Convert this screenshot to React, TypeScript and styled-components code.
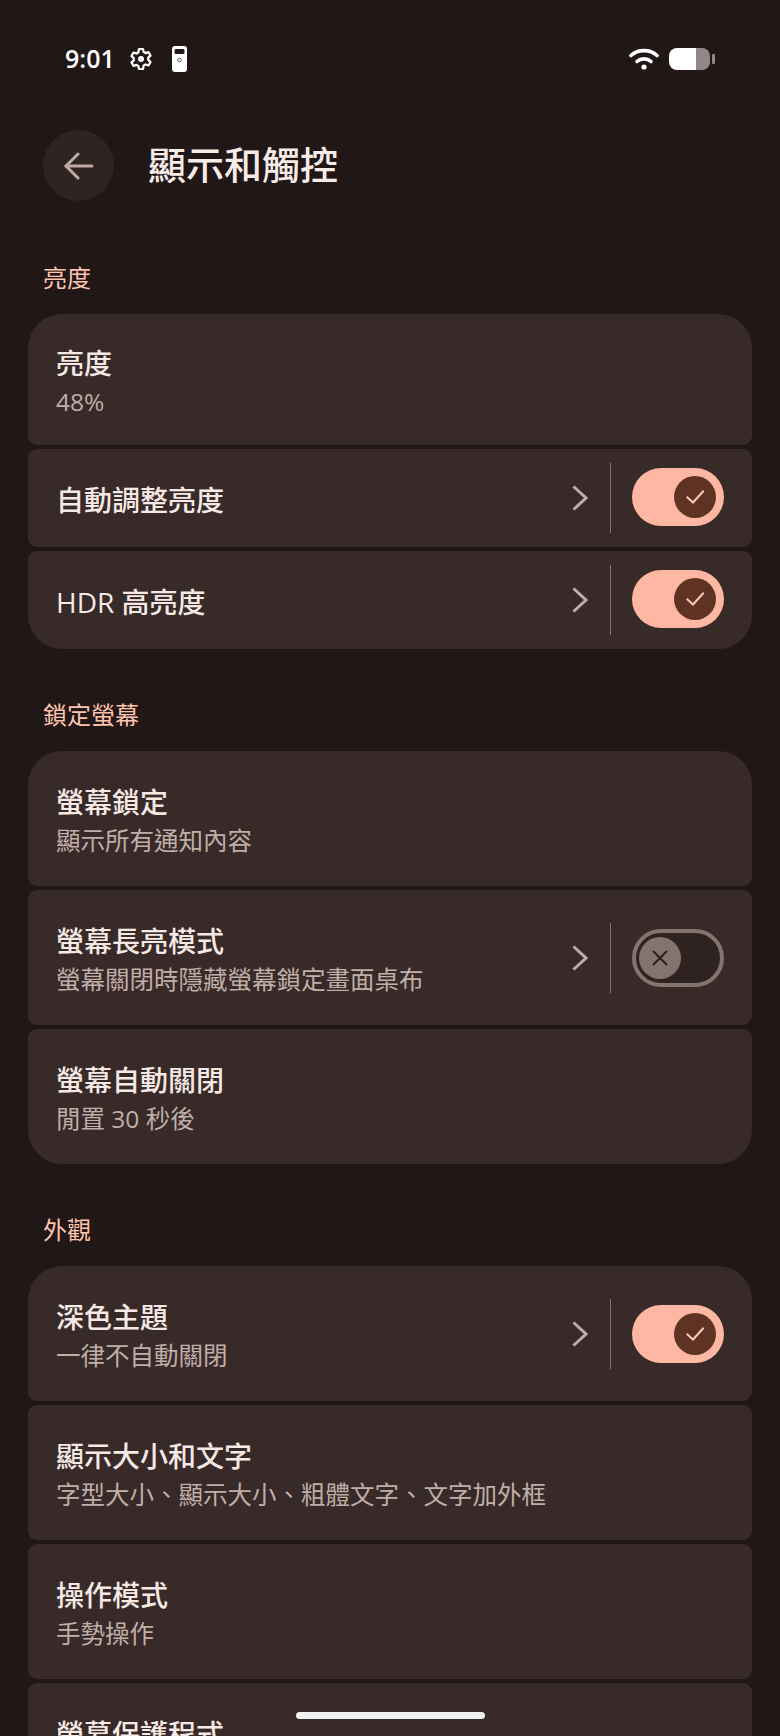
import React from "react";
import styled, { createGlobalStyle } from "styled-components";

const Global = createGlobalStyle`
  html, body { margin: 0; padding: 0; background: #201716; }
  body { width: 780px; height: 1736px; overflow: hidden; }
`;

const Font = `"Open Sans", "Noto Sans CJK TC", "Noto Sans", sans-serif`;

const Page = styled.div`
  position: relative;
  width: 780px;
  height: 1736px;
  overflow: hidden;
  background: #201716;
  font-family: ${Font};
  color: #f1dfda;
`;

const StatusBar = styled.div`
  height: 34px;
  padding: 42px 0 0 65px;
  display: flex;
  align-items: center;
  color: #fff;
`;

const Clock = styled.span`
  font-size: 25px;
  font-weight: 600;
  width: 60px;
  margin-top: -3px;
`;

const StatusGlyph = styled.svg<{ $ml?: number }>`
  display: block;
  flex: none;
  margin-left: ${(p) => p.$ml ?? 0}px;
`;

const StatusRight = styled.div`
  margin-left: auto;
  margin-right: 65px;
  display: flex;
  align-items: center;
  gap: 9px;
`;

const Header = styled.div`
  margin-top: 54px;
  padding-left: 43px;
  display: flex;
  align-items: center;
  height: 71px;
`;

const BackButton = styled.div`
  width: 71px;
  height: 71px;
  border-radius: 50%;
  background: #2e2422;
  display: flex;
  align-items: center;
  justify-content: center;
`;

const Title = styled.h1`
  margin: -4px 0 0 34px;
  font-size: 38px;
  line-height: 48px;
  font-weight: 500;
  color: #f8ece8;
`;

const SectionLabel = styled.div<{ $mt: number }>`
  margin-top: ${(p) => p.$mt}px;
  padding-left: 43px;
  font-size: 24px;
  line-height: 32px;
  font-weight: 400;
  color: #ffc4ae;
`;

const Card = styled.div`
  margin: 20px 28px 0;
  display: flex;
  flex-direction: column;
  gap: 4px;
`;

const Row = styled.div<{ $h: number; $first?: boolean; $last?: boolean }>`
  height: ${(p) => p.$h}px;
  box-sizing: border-box;
  background: #382a28;
  border-radius: ${(p) => (p.$first ? "34px 34px" : "9px 9px")} ${(p) => (p.$last ? "34px 34px" : "9px 9px")};
  padding: 0 28px 0 28px;
  display: flex;
  align-items: center;
  flex: none;
`;

const RowText = styled.div`
  flex: 1;
  min-width: 0;
  padding-top: 4px;
`;

const RowTitle = styled.div`
  font-size: 28px;
  line-height: 38px;
  font-weight: 500;
  color: #f6e9e5;
  white-space: nowrap;
`;

const RowSub = styled.div`
  margin-top: 2px;
  font-size: 24.5px;
  line-height: 35px;
  font-weight: 400;
  color: #c0aea8;
  white-space: nowrap;
`;

const Chevron = styled.svg`
  display: block;
  flex: none;
  margin-right: 22px;
`;

const Divider = styled.div`
  width: 1px;
  height: 70px;
  flex: none;
  background: #85736e;
  margin-right: 21px;
`;

const Track = styled.div<{ $on: boolean; $compact: boolean }>`
  width: 92px;
  height: 58px;
  margin-bottom: ${(p) => (p.$compact ? 2 : 0)}px;
  box-sizing: border-box;
  border-radius: 29px;
  flex: none;
  display: flex;
  align-items: center;
  background: ${(p) => (p.$on ? "#fdb7a2" : "#2f2321")};
  border: ${(p) => (p.$on ? "none" : "4px solid #85736e")};
  justify-content: ${(p) => (p.$on ? "flex-end" : "flex-start")};
  padding: ${(p) => (p.$on ? "0 8px" : "0 3px")};
`;

const Thumb = styled.div<{ $on: boolean }>`
  width: 42px;
  height: 42px;
  border-radius: 50%;
  background: ${(p) => (p.$on ? "#5f3324" : "#85736e")};
  display: flex;
  align-items: center;
  justify-content: center;
`;

const HomeBar = styled.div`
  position: absolute;
  left: 296px;
  top: 1712px;
  width: 189px;
  height: 7px;
  border-radius: 4px;
  background: #f1f1f1;
`;

function Control({ on, compact }: { on: boolean; compact: boolean }) {
  return (
    <>
      <Chevron width="16" height="26" viewBox="0 0 16 26" fill="none" stroke="#bdaea9" strokeWidth="3">
        <path d="M1.5 1.5 L14 13 L1.5 24.5" />
      </Chevron>
      <Divider />
      <Track $on={on} $compact={compact}>
        <Thumb $on={on}>
          {on ? (
            <svg width="22" height="22" viewBox="0 0 22 22" fill="none" stroke="#ffc9b6" strokeWidth="2" strokeLinecap="square">
              <path d="M3.5 11.5 L9 16.5 L19 5.5" />
            </svg>
          ) : (
            <svg width="20" height="20" viewBox="0 0 20 20" fill="none" stroke="#2c201e" strokeWidth="2">
              <path d="M3 3 L17 17 M17 3 L3 17" />
            </svg>
          )}
        </Thumb>
      </Track>
    </>
  );
}

type Item = { title: string; sub?: string; on?: boolean; h: number };

function Group({ items }: { items: Item[] }) {
  return (
    <Card>
      {items.map((it, i) => (
        <Row key={it.title} $h={it.h} $first={i === 0} $last={i === items.length - 1}>
          <RowText>
            <RowTitle>{it.title}</RowTitle>
            {it.sub && <RowSub>{it.sub}</RowSub>}
          </RowText>
          {it.on !== undefined && <Control on={it.on} compact={it.h < 100} />}
        </Row>
      ))}
    </Card>
  );
}

export default function App() {
  return (
    <Page>
      <Global />
      <StatusBar>
        <Clock>9:01</Clock>
        <StatusGlyph $ml={4} width="24" height="24" viewBox="0 0 24 24" fill="none" stroke="#fff" strokeWidth="2.2" strokeLinejoin="round">
          <path d="M10 2 h4 l.6 3 a7.5 7.5 0 0 1 2 1.15 l2.9-1 2 3.5 -2.3 2 a7.5 7.5 0 0 1 0 2.3 l2.3 2 -2 3.5 -2.9-1 a7.5 7.5 0 0 1-2 1.15 L14 22 h-4 l-.6-3 a7.5 7.5 0 0 1-2-1.15 l-2.9 1 -2-3.5 2.3-2 a7.5 7.5 0 0 1 0-2.3 l-2.3-2 2-3.5 2.9 1 a7.5 7.5 0 0 1 2-1.15 Z" />
          <circle cx="12" cy="12" r="3" fill="#fff" stroke="none" />
        </StatusGlyph>
        <StatusGlyph $ml={19} width="15" height="26" viewBox="0 0 15 26">
          <rect x="0" y="0" width="15" height="26" rx="3" fill="#fff" />
          <rect x="2.5" y="3" width="10" height="5" rx="1.5" fill="#201716" />
          <circle cx="7.5" cy="14" r="1.8" fill="none" stroke="#555" strokeWidth="1" />
        </StatusGlyph>
        <StatusRight>
          <StatusGlyph width="30" height="24" viewBox="0 0 30 24" fill="none" stroke="#fff" strokeWidth="3.6" strokeLinecap="round">
            <path d="M2 8.5 C 9 2, 21 2, 28 8.5" />
            <path d="M8 14.5 C 12 11, 18 11, 22 14.5" />
            <circle cx="15" cy="20" r="2.6" fill="#fff" stroke="none" />
          </StatusGlyph>
          <StatusGlyph width="47" height="24" viewBox="0 0 47 24">
            <path d="M9 1 H28 V23 H9 A8 8 0 0 1 1 15 V9 A8 8 0 0 1 9 1 Z" fill="#fff" />
            <path d="M28 1 H34 A8 8 0 0 1 42 9 V15 A8 8 0 0 1 34 23 H28 Z" fill="#8f8886" />
            <rect x="44" y="7" width="3" height="10" rx="1" fill="#8f8886" />
          </StatusGlyph>
        </StatusRight>
      </StatusBar>

      <Header>
        <BackButton>
          <svg width="30" height="28" viewBox="0 0 30 28" fill="none" stroke="#bfaaa4" strokeWidth="3" strokeLinecap="round" strokeLinejoin="round">
            <path d="M14 2 L2 14 L14 26" />
            <path d="M2 14 H28" />
          </svg>
        </BackButton>
        <Title>顯示和觸控</Title>
      </Header>

      <SectionLabel $mt={61}>亮度</SectionLabel>
      <Group
        items={[
          { title: "亮度", sub: "48%", h: 131 },
          { title: "自動調整亮度", on: true, h: 98 },
          { title: "HDR 高亮度", on: true, h: 98 },
        ]}
      />

      <SectionLabel $mt={50}>鎖定螢幕</SectionLabel>
      <Group
        items={[
          { title: "螢幕鎖定", sub: "顯示所有通知內容", h: 135 },
          { title: "螢幕長亮模式", sub: "螢幕關閉時隱藏螢幕鎖定畫面桌布", on: false, h: 135 },
          { title: "螢幕自動關閉", sub: "閒置 30 秒後", h: 135 },
        ]}
      />

      <SectionLabel $mt={50}>外觀</SectionLabel>
      <Group
        items={[
          { title: "深色主題", sub: "一律不自動關閉", on: true, h: 135 },
          { title: "顯示大小和文字", sub: "字型大小、顯示大小、粗體文字、文字加外框", h: 135 },
          { title: "操作模式", sub: "手勢操作", h: 135 },
          { title: "螢幕保護程式", sub: "\u00a0", h: 135 },
        ]}
      />
      <HomeBar />
    </Page>
  );
}
